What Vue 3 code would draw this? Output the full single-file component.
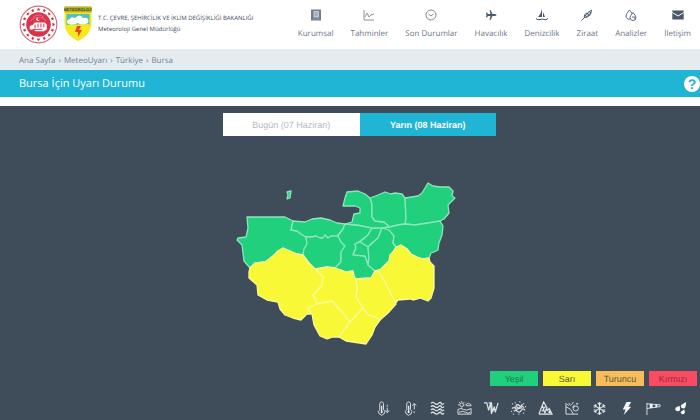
<script setup>
import { ref } from 'vue'

const nav = [
  { label: 'Kurumsal', icon: 'book' },
  { label: 'Tahminler', icon: 'chart' },
  { label: 'Son Durumlar', icon: 'clock' },
  { label: 'Havacılık', icon: 'plane' },
  { label: 'Denizcilik', icon: 'boat' },
  { label: 'Ziraat', icon: 'leaf' },
  { label: 'Analizler', icon: 'drops' },
  { label: 'İletişim', icon: 'mail' },
]

const days = ['Bugün (07 Haziran)', 'Yarın (08 Haziran)']
const selected = ref(1)

const levels = [
  { label: 'Yeşil', tone: 'green' },
  { label: 'Sarı', tone: 'yellow' },
  { label: 'Turuncu', tone: 'orange' },
  { label: 'Kırmızı', tone: 'red' },
]

const districts = [
  { tone: 'green', d: 'M247 217H285L289 219L293 221L291 230L297 231L301 234L306 237L307 244L304 249L303 255L297 254L283 248L278 251L273 256L265 262L255 263L250 268L244 261L242 245L237 240L238 238L246 237L248 228Z' },
  { tone: 'green', d: 'M293 221L305 222L312 219L321 218L330 220L337 223L345 224L343 229L338 235L335 237L331 236L328 238L325 235L323 238L320 238L316 236L312 237L306 237L301 234L297 231L291 230Z' },
  { tone: 'green', d: 'M306 237L312 237L316 236L320 238L323 238L325 235L328 238L331 236L338 236L341 242L345 246L341 252L341 262L335 268L327 267L322 268L315 269L309 263L303 255L304 249L307 244Z' },
  { tone: 'green', d: 'M345 224L357 225L365 226L372 228L368 235L360 241L355 244L356 248L353 254L365 256L368 265L375 271L371 278L364 278L356 279L354 276L353 271L346 272L341 270L335 268L341 262L341 252L345 246L341 242L338 236L343 229Z' },
  { tone: 'green', d: 'M372 228L382 228L378 238L372 243L368 247L360 242L368 235Z' },
  { tone: 'green', d: 'M360 242L368 247L369 258L368 264L365 256L353 255L356 248L355 244Z' },
  { tone: 'green', d: 'M382 228L390 229L394 236L393 243L396 247L393 252L390 255L389 261L381 269L375 271L368 265L369 258L368 247L378 238Z' },
  { tone: 'green', d: 'M347 192L358 191L365 194L370 198L372 204L372 217L375 221L384 222L390 227L382 228L372 228L357 225L345 224L352 222L354 214L360 213L360 208L355 206L343 206L345 198Z' },
  { tone: 'green', d: 'M370 198L378 195L385 192L391 194L395 193L402 194L405 198L406 218L405 224L398 225L390 227L384 222L375 221L372 217L372 204Z' },
  { tone: 'green', d: 'M405 198L418 196L422 193L428 183L433 186L440 187L449 187L453 191L452 196L455 198L448 205L449 213L444 219L438 222L428 223L415 225L405 224L406 218Z' },
  { tone: 'green', d: 'M390 227L398 225L405 224L415 225L428 223L440 221L443 226L442 235L439 243L438 250L434 252L431 253L429 258L423 259L417 257L411 254L407 249L401 245L396 247L393 243L394 236L389 230L382 228Z' },
  { tone: 'yellow', d: 'M401 245L407 249L411 254L417 257L423 259L429 258L430 262L434 266L434 288L431 298L428 301L420 298L413 300L410 299L398 300L394 305L388 288L379 272L375 271L381 269L389 261L390 255L393 252L396 247Z' },
  { tone: 'yellow', d: 'M375 271L379 272L388 288L394 300L396 304L388 313L380 320L375 317L368 315L363 308L356 297L357 287L356 279L371 278Z' },
  { tone: 'yellow', d: 'M315 269L327 267L335 268L341 270L346 272L353 271L354 276L356 279L357 287L356 297L363 308L350 322L340 310L332 301L317 304L313 295L322 285L323 277Z' },
  { tone: 'yellow', d: 'M317 304L332 301L340 310L350 322L340 337L333 337L327 339L320 336L314 325L312 314L307 308Z' },
  { tone: 'yellow', d: 'M350 322L363 308L368 315L375 317L380 320L375 327L372 335L366 344L353 342L346 341L339 337Z' },
  { tone: 'yellow', d: 'M283 248L297 254L303 255L309 263L315 269L323 277L322 285L313 295L317 304L307 308L311 314L307 314L301 320L293 318L285 315L280 309L278 302L267 300L258 295L257 285L249 278L249 272L250 268L255 263L265 262L273 256L278 251Z' },
  { tone: 'green', d: 'M287 192L291 191L290 198L287 199L288 195Z' },
]

const hazards = ['cold', 'hot', 'waves', 'dust', 'frost', 'fog', 'avalanche', 'slide', 'snow', 'bolt', 'wind', 'rain']
const stars = Array.from({ length: 16 }, (_, i) => i * 22.5)
</script>

<template>
  <div class="page">
    <header class="header">
      <a class="brand" href="#">
        <svg class="seal" viewBox="0 0 40 40" aria-hidden="true">
          <circle cx="20" cy="20" r="18.8" fill="#fff" stroke="#cf6c7b" stroke-width="1.2" />
          <g fill="#c92f47">
            <path v-for="a in stars" :key="a" :transform="`rotate(${a} 20 20)`" d="M20 2.8l.6 1.1 1.2.1-.9.9.3 1.2-1.2-.6-1.2.6.3-1.2-.9-.9 1.2-.1z" />
          </g>
          <circle cx="20" cy="20" r="12.6" fill="#d9344b" />
          <path d="M14.5 12.5Q20 8 25.500 12.500M12 16Q20 9 28 16" fill="none" stroke="#eb8c98" stroke-width=".7" />
          <circle cx="19.500" cy="14.500" r="1.8" fill="#fff" /><circle cx="20.300" cy="14.200" r="1.4" fill="#d9344b" />
          <path d="M11 21.500l3-1 2-2.500h10.500l2 2v5l-3 2H17l-2-2h-4z" fill="#fff" />
          <path d="M16.500 20v4M19.500 19v4M22.500 19v4M25.500 19v4M14 25h10" fill="none" stroke="#d9344b" stroke-width="1" />
        </svg>
        <svg class="shield" viewBox="0 0 28 36" aria-hidden="true">
          <path d="M.5.500h27V18Q27 29 14 35Q1 29 .5 18z" fill="#f4e923" />
          <path d="M.5.500h27v6H.5z" fill="#b9b52c" />
          <path d="M2.500 8h23v11h-23z" fill="#55bfc0" />
          <path d="M3 19l22-1Q24 27 14 32Q4 27 3 19z" fill="#f8e81e" />
          <path d="M4 18Q1 14 6 13Q7 10 11 12Q16 7 19 12Q26 11 24 17Q18 20 14 17Q9 20 4 18z" fill="#fffef5" />
          <path d="M13 20h4l-2 4h3l-4 7v-5h-3z" fill="#e44922" />
          <text x="14" y="5" text-anchor="middle">METEOROLOJİ</text>
        </svg>
        <span class="brand-text">
          <span>T.C. ÇEVRE, ŞEHİRCİLİK VE İKLİM DEĞİŞİKLİĞİ BAKANLIĞI</span>
          <span>Meteoroloji Genel Müdürlüğü</span>
        </span>
      </a>
      <nav class="nav">
        <a v-for="item in nav" :key="item.label" href="#">
          <svg viewBox="0 0 12 12" aria-hidden="true">
            <g v-if="item.icon === 'book'"><path d="M1 .5h10v11H1z" fill="#717d8d" /><path d="M3.500 2h5.500v6.500H3.500z" fill="#c3cad2" /><path d="M4.500 4h3.500M4.500 6h3.500M3 10h7" stroke="#8d97a4" /></g>
            <g v-else-if="item.icon === 'chart'" fill="none" stroke="#8994a1"><path d="M1 1v10h10M2 8l2-4 2 4 2-2 3-1" /></g>
            <g v-else-if="item.icon === 'clock'" fill="none" stroke="#7d8997"><circle cx="6" cy="6" r="5" /><path d="M3.500 5l2.500 2 2.500-2" /></g>
            <path v-else-if="item.icon === 'plane'" d="M11.500 6Q11.500 7 9.500 7H7.500L5.500 11H4.500L5.500 7H3L2 8.500H1L1.500 6 1 3.500H2L3 5h2.500L4.500 1h1l2 4h2Q11.500 5 11.500 6z" fill="#4a586a" />
            <g v-else-if="item.icon === 'boat'"><path d="M6 0v8H2Q5 5 6 0zM7 3l2 5H7z" fill="#4a586a" /><path d="M0 9.500q2 2 4 1t4 0 4-1" fill="none" stroke="#4a586a" /></g>
            <g v-else-if="item.icon === 'leaf'"><path d="M3 9Q2 6 5 4L11 .5Q11 6 7 8Q5 9.500 3 9z" fill="#596576" /><path d="M.5 11.500L10 2M4 5l3 2M6 3l3 2" fill="none" stroke="#fff" stroke-width=".6" /><path d="M.5 11.500L4 8" stroke="#596576" /></g>
            <g v-else-if="item.icon === 'drops'" fill="none" stroke="#627081"><path d="M4.500 1Q1 5 1 7a3 3 0 0 0 4 3M4.500 1l3 4" /><path d="M8 3.500Q5 7 5 8.500a3 3 0 0 0 6 0Q11 7 8 3.500zM7 8h3v3" /></g>
            <g v-else><path d="M.3 1.500h11.400v9H.3z" fill="#4a586a" /><path d="M.3 3.500L6 7l5.700-3.500" fill="none" stroke="#fff" /></g>
          </svg>
          <span>{{ item.label }}</span>
        </a>
      </nav>
    </header>

    <nav class="crumbs">
      <a href="#">Ana Sayfa</a><i>›</i><a href="#">MeteoUyarı</a><i>›</i><a href="#">Türkiye</a><i>›</i><a href="#">Bursa</a>
    </nav>

    <div class="title-bar">
      <h1>Bursa İçin Uyarı Durumu</h1>
      <button class="help" type="button" aria-label="Yardım">?</button>
    </div>

    <main class="stage">
      <div class="tabs">
        <button v-for="(day, i) in days" :key="day" type="button" :class="{ active: selected === i }" @click="selected = i">{{ day }}</button>
      </div>

      <svg class="map" viewBox="230 180 240 170" role="img" aria-label="Bursa">
        <path v-for="(area, i) in districts" :key="i" :d="area.d" :class="area.tone" />
      </svg>

      <footer class="legend">
        <div class="levels">
          <button v-for="level in levels" :key="level.label" type="button" :class="level.tone">{{ level.label }}</button>
        </div>
        <div class="hazards">
          <svg v-for="name in hazards" :key="name" viewBox="0 0 16 16" aria-hidden="true">
            <g v-if="name === 'cold' || name === 'hot'">
              <path d="M4 9V3a2 2 0 0 1 4 0v6a3.300 3.300 0 1 1-4 0z" /><path d="M6 5v6" stroke-width="1.500" /><circle cx="6" cy="11.800" r="1.200" class="solid" />
              <path v-if="name === 'cold'" d="M12 4v2M12 7v5M10 10l2 2.500 2-2.500" /><path v-else d="M12 13v-2M12 9V3M10 5l2-2.500L14 5" />
            </g>
            <path v-else-if="name === 'waves'" stroke-width="1.400" d="M1 2.500q2-2 4 0t4 0 3 0 3 0M1 6q2-2 4 0t4 0 3 0 3 0M1 9.500q2-2 4 0t4 0 3 0 3 0M1 13q2-2 4 0t4 0 3 0 3 0" />
            <g v-else-if="name === 'dust'"><path d="M1 9q3-2 6 0t8-1v6H1zM2 12q4-2 7 0t5 0" /><circle cx="5" cy="4" r="2" /><path d="M5 0v1M5 7v1M1 4h1M8 4h1M2 1l1 1M8 1L7 2M10 5q-1-2 1-2 1-2 2 0 2 0 2 2z" /></g>
            <path v-else-if="name === 'frost'" d="M0 2h3l2 8 2-8M5 2h3l1 10 2-6 1 6 3-10M7 2l1 12" stroke-width="1.300" />
            <path v-else-if="name === 'fog'" d="M1 8q2-2 4 0t4-1 5 0M3 11q2-2 4 0t4-1 4 0M5 5q2-2 4 0t3-2M3 7l3-1 2 2 4-1M1 3h1M4 2h1M9 1h1M13 3h1M15 6h1M0 11h1M2 14h1M8 14h1M13 13h1" stroke-width="1.300" />
            <g v-else-if="name === 'avalanche'"><path d="M1 14L6 1l4 7M1 14h14l-3-6-2 2-1-2-2 6M3 8l2-2 1 2 2-2M4 11l2-2 1 3" stroke-width="1.300" /><path d="M12 9l2 4h-3z" class="solid" /></g>
            <g v-else-if="name === 'slide'"><path d="M1 2v12h13M1 6l5 3 3 5M4 2l2 3M9 1L7 4M2 3l2 2M8 7l2-3" /><circle cx="11.500" cy="8" r="2.700" /><circle cx="13" cy="3" r=".7" /></g>
            <g v-else-if="name === 'snow'" stroke-width="1.200"><path v-for="a in [0, 60, 120]" :key="a" :transform="`rotate(${a} 8 8)`" d="M8 1v14M6 2l2 2 2-2M6 14l2-2 2 2" /></g>
            <path v-else-if="name === 'bolt'" class="solid" d="M8 1h5l-3 5h3L5 15l2-6H4z" />
            <g v-else-if="name === 'wind'"><path d="M1 15V2M1 3l14 1v2L1 8" /><path d="M4 3l3 .300v4L4 7.500zM10 3.600l2 .2v2.700l-2 .3z" class="solid" /></g>
            <path v-else class="solid" d="M14 1Q14 8 11 8Q7 7 9 4zM7 5Q9 11 5 11Q1 10 3 7zM12 9Q14 14 10 14Q7 13 9 11z" />
          </svg>
        </div>
      </footer>
    </main>
  </div>
</template>

<style>
body {
  margin: 0;
  background: #3f4c5a;
}
</style>

<style scoped>
.page {
  min-height: 100vh;
  display: flex;
  flex-direction: column;
  font-family: "Open Sans", "Noto Sans", sans-serif;
  text-rendering: geometricPrecision;
  color: #657180;
}
a {
  color: inherit;
  text-decoration: none;
}
button {
  border: 0;
  padding: 0;
  font-family: "Liberation Sans", Arial, sans-serif;
  text-rendering: inherit;
}
.header {
  box-sizing: border-box;
  display: flex;
  align-items: center;
  justify-content: space-between;
  height: 49px;
  padding: 0 9px 1px 19px;
  background: #fff;
}
.brand {
  display: flex;
  align-items: center;
}
.seal {
  width: 39px;
  height: 39px;
}
.shield {
  width: 28px;
  height: 36px;
  margin: 0 6px;
}
.shield text {
  font: bold 4px "Liberation Sans", sans-serif;
  fill: #3d4a22;
}
.brand-text {
  display: flex;
  flex-direction: column;
  font-size: 6px;
  line-height: 11px;
  white-space: nowrap;
  color: #404c5a;
}
.nav {
  display: flex;
  gap: 17px;
}
.nav a {
  display: flex;
  flex-direction: column;
  align-items: center;
  gap: 7px;
  font-size: 8px;
  line-height: 12px;
  white-space: nowrap;
  color: #6c7785;
}
.nav svg {
  width: 12px;
  height: 12px;
}
.crumbs {
  box-sizing: border-box;
  display: flex;
  align-items: center;
  gap: 3px;
  height: 21px;
  padding: 2px 19px 0;
  font-size: 8px;
  background: #e4ecf0;
  color: #738190;
}
.crumbs i {
  font-style: normal;
}
.title-bar {
  display: flex;
  align-items: center;
  justify-content: space-between;
  height: 27px;
  padding-left: 19px;
  background: #20b5d5;
  border-bottom: 9px solid #fff;
}
.title-bar h1 {
  margin: 0;
  font-size: 11px;
  font-weight: 400;
  color: #fff;
}
.help {
  width: 16px;
  height: 16px;
  border-radius: 50%;
  background: #fff;
  color: #20b5d5;
  font-size: 14px;
  font-weight: 700;
  line-height: 16px;
}
.stage {
  flex: 1;
  display: flex;
  flex-direction: column;
  align-items: center;
  padding-top: 7px;
  background: #3f4c5a;
}
.tabs {
  display: grid;
  grid-template-columns: 1fr 1fr;
  width: 39%;
  margin-left: 19px;
}
.tabs button {
  height: 23px;
  background: #fff;
  color: #b5b9bd;
  font-size: 9px;
}
.tabs .active {
  background: #20b5d5;
  color: #fff;
  font-weight: 700;
}
.map {
  width: 240px;
  margin-top: 44px;
}
.map path {
  stroke: #8ce5bb;
  stroke-width: 1.3;
  stroke-linejoin: round;
}
.map .green {
  fill: #20d07d;
}
.map .yellow {
  fill: #f8f837;
  stroke: #faf999;
}
.legend {
  align-self: stretch;
  display: flex;
  flex-direction: column;
  align-items: flex-end;
  gap: 15px;
  margin-top: auto;
  padding-bottom: 4px;
}
.levels {
  display: flex;
  gap: 5px;
  padding-right: 3px;
}
.levels button {
  width: 48px;
  height: 15px;
  font-size: 9px;
  color: #5b5a40;
}
.levels .green {
  background: #20d07d;
  color: #22744f;
}
.levels .yellow {
  background: #f8f837;
}
.levels .orange {
  background: #f8bd58;
}
.levels .red {
  background: #fa4b62;
  color: #8f3041;
}
.hazards {
  display: flex;
  gap: 12px;
  padding-right: 12px;
}
.hazards svg {
  width: 15px;
  height: 15px;
  fill: none;
  stroke: #dce2e6;
}
.hazards .solid {
  fill: #f3f5f7;
  stroke: none;
}
</style>
